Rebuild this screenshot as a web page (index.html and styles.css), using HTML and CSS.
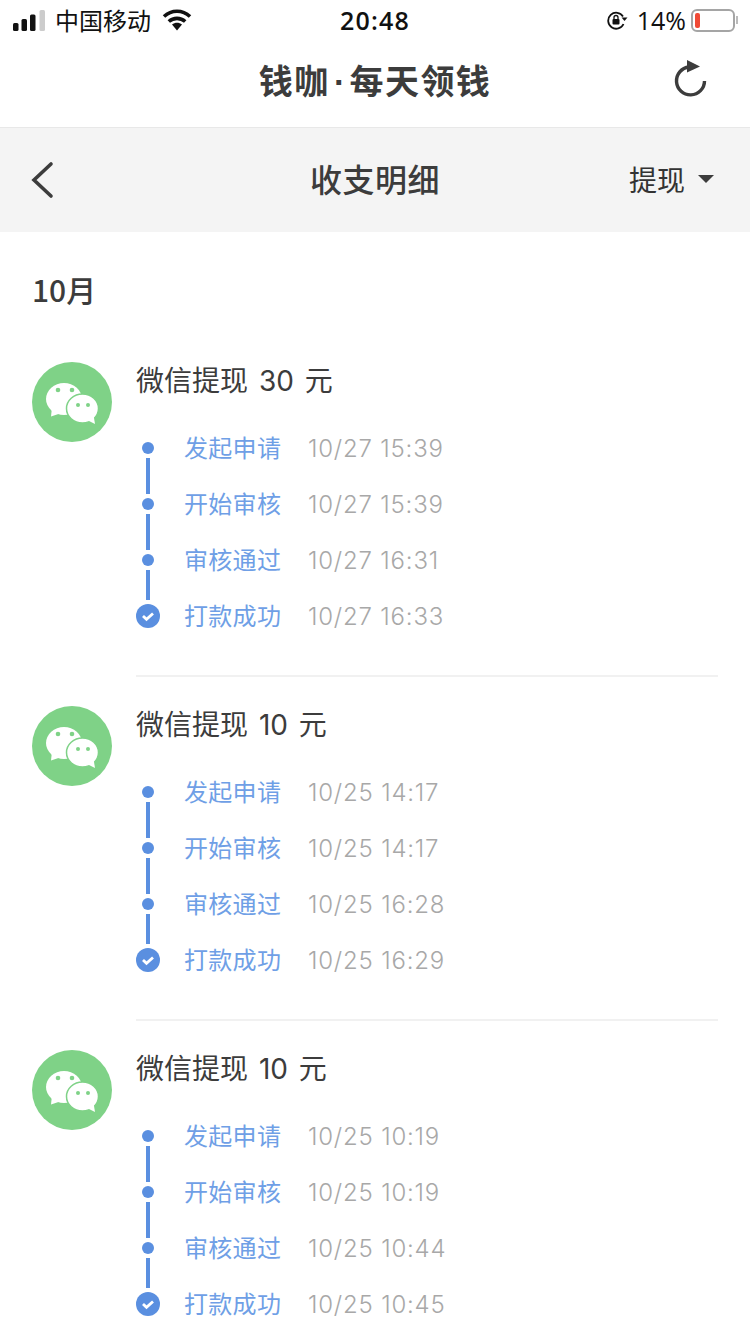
FILE: index.html
```html
<!DOCTYPE html>
<html lang="zh-CN">
<head>
    <meta charset="UTF-8">
    <meta name="viewport" content="width=device-width, initial-scale=1.0">
    <title>钱咖·每天领钱</title>
    <link rel="stylesheet" href="styles.css">
</head>
<body>
    <svg class="defs" width="0" height="0">
        <symbol id="wechat" viewBox="0 0 80 80">
            <circle cx="40" cy="40" r="40" fill="#7fd287"/>
            <ellipse cx="32" cy="37" rx="18" ry="16" fill="#fff"/>
            <path d="M20 45l-1 9.500 12-4z" fill="#fff"/>
            <ellipse cx="50.500" cy="46.500" rx="16" ry="14.500" fill="#fff" stroke="#7fd287" stroke-width="1.500"/>
            <path d="M55 58l8 4-1.500-9z" fill="#fff"/>
            <circle cx="26" cy="28" r="2.300" fill="#7fd287"/>
            <circle cx="40" cy="28" r="2.300" fill="#7fd287"/>
            <circle cx="46" cy="43" r="2" fill="#7fd287"/>
            <circle cx="56" cy="43" r="2" fill="#7fd287"/>
        </symbol>
    </svg>

    <!-- status bar -->
    <div class="status-bar">
        <div class="status-left">
            <svg width="33" height="21" viewBox="0 0 33 21">
                <rect x="0" y="13" width="5.500" height="8" rx="1.500" fill="#111"/>
                <rect x="8.500" y="9" width="5.500" height="12" rx="1.500" fill="#111"/>
                <rect x="17" y="4.500" width="5.500" height="16.500" rx="1.500" fill="#111"/>
                <rect x="26.500" y="0" width="5.500" height="21" rx="1.500" fill="#ccc"/>
            </svg>
            <span class="carrier">中国移动</span>
            <svg width="30" height="22" viewBox="0 0 30 22">
                <path d="M2 7.500C9.500.500 20.500.500 28 7.500" fill="none" stroke="#111" stroke-width="3.600"/>
                <path d="M6.800 12.500C11.500 8.300 18.500 8.300 23.200 12.500" fill="none" stroke="#111" stroke-width="3.600"/>
                <path d="M10 15.500c3-2.300 7-2.300 10 0l-5 6z" fill="#111"/>
            </svg>
        </div>
        <div class="clock">20:48</div>
        <div class="status-right">
            <svg width="22" height="20" viewBox="0 0 22 20">
                <path d="M17 6.500A8 8 0 1 0 17.500 14" fill="none" stroke="#111" stroke-width="1.800"/>
                <path d="M15.500 7.500h6l-3 3.500z" fill="#111"/>
                <rect x="6.500" y="9" width="7" height="5.500" rx="1" fill="#111"/>
                <path d="M8 9V7.500a2 2 0 0 1 4 0V9" fill="none" stroke="#111" stroke-width="1.300"/>
            </svg>
            <span class="battery-pct">14%</span>
            <div class="battery">
                <div class="battery-level"></div>
            </div>
            <div class="battery-cap"></div>
        </div>
    </div>

    <!-- title bar -->
    <div class="app-bar">
        <div class="app-title">钱咖<span class="app-dot">·</span>每天领钱</div>
        <svg class="reload" width="36" height="38" viewBox="0 0 36 38">
            <path d="M32.500 22A14 14 0 1 1 17 8" fill="none" stroke="#3c3c3c" stroke-width="3.400"/>
            <path d="M15 1l13 6.500-13 6z" fill="#3c3c3c"/>
        </svg>
    </div>

    <!-- sub header -->
    <div class="sub-bar">
        <svg class="back" width="24" height="38" viewBox="0 0 24 38">
            <path d="M21 3L4 19l17 16" fill="none" stroke="#3c3c3c" stroke-width="3.600" stroke-linecap="round"/>
        </svg>
        <div class="sub-title">收支明细</div>
        <div class="filter">提现<span class="caret"></span></div>
    </div>

    <div class="content">
        <h2 class="month">10月</h2>

        <div class="record">
            <svg class="avatar"><use href="#wechat"/></svg>
            <div class="record-body">
                <div class="record-title">微信提现 30 元</div>
                <ul class="steps">
                    <li class="step"><span class="step-name">发起申请</span><span class="step-time">10/27 15:39</span></li>
                    <li class="step"><span class="step-name">开始审核</span><span class="step-time">10/27 15:39</span></li>
                    <li class="step"><span class="step-name">审核通过</span><span class="step-time">10/27 16:31</span></li>
                    <li class="step done"><svg class="check" viewBox="0 0 24 24"><path d="M7 12l3.500 3.300L17 9.500" fill="none" stroke="#fff" stroke-width="2.800"/></svg><span class="step-name">打款成功</span><span class="step-time">10/27 16:33</span></li>
                </ul>
            </div>
        </div>

        <div class="record">
            <svg class="avatar"><use href="#wechat"/></svg>
            <div class="record-body">
                <div class="record-title">微信提现 10 元</div>
                <ul class="steps">
                    <li class="step"><span class="step-name">发起申请</span><span class="step-time">10/25 14:17</span></li>
                    <li class="step"><span class="step-name">开始审核</span><span class="step-time">10/25 14:17</span></li>
                    <li class="step"><span class="step-name">审核通过</span><span class="step-time">10/25 16:28</span></li>
                    <li class="step done"><svg class="check" viewBox="0 0 24 24"><path d="M7 12l3.500 3.300L17 9.500" fill="none" stroke="#fff" stroke-width="2.800"/></svg><span class="step-name">打款成功</span><span class="step-time">10/25 16:29</span></li>
                </ul>
            </div>
        </div>

        <div class="record">
            <svg class="avatar"><use href="#wechat"/></svg>
            <div class="record-body">
                <div class="record-title">微信提现 10 元</div>
                <ul class="steps">
                    <li class="step"><span class="step-name">发起申请</span><span class="step-time">10/25 10:19</span></li>
                    <li class="step"><span class="step-name">开始审核</span><span class="step-time">10/25 10:19</span></li>
                    <li class="step"><span class="step-name">审核通过</span><span class="step-time">10/25 10:44</span></li>
                    <li class="step done"><svg class="check" viewBox="0 0 24 24"><path d="M7 12l3.500 3.300L17 9.500" fill="none" stroke="#fff" stroke-width="2.800"/></svg><span class="step-name">打款成功</span><span class="step-time">10/25 10:45</span></li>
                </ul>
            </div>
        </div>
    </div>
</body>
</html>
```

FILE: styles.css
```css
html, body {
    margin: 0;
    padding: 0;
    height: 1334px;
    overflow: hidden;
    background-color: #fff;
    font-family: "Noto Sans CJK SC", "Noto Sans", sans-serif;
    color: #3c3c3c;
}
.defs {
    display: block;
    height: 0;
}
.status-bar {
    height: 40px;
    display: flex;
    align-items: center;
    justify-content: space-between;
    padding: 0 10px 0 13px;
    color: #111;
    position: relative;
}
.status-left {
    display: flex;
    align-items: center;
}
.carrier {
    font-size: 24px;
    margin-left: 9px;
    margin-right: 11px;
    padding-bottom: 2px;
}
.clock {
    position: absolute;
    left: 0;
    right: 0;
    text-align: center;
    font-family: "Open Sans", sans-serif;
    font-size: 25px;
    font-weight: 600;
    letter-spacing: 1.200px;
}
.status-right {
    display: flex;
    align-items: center;
}
.battery-pct {
    font-family: "Open Sans", sans-serif;
    font-size: 25px;
    margin: 0 5px 0 9px;
}
.battery {
    width: 44px;
    height: 23px;
    box-sizing: border-box;
    border: 2px solid #a5a5a5;
    border-radius: 6px;
    padding: 2px;
}
.battery-level {
    width: 5px;
    height: 100%;
    background-color: #f04a36;
    border-radius: 2px;
}
.battery-cap {
    width: 2px;
    height: 8px;
    margin-left: 1px;
    margin-right: 2px;
    background-color: #bbb;
}
.app-bar {
    height: 87px;
    display: flex;
    align-items: center;
    justify-content: center;
    position: relative;
    border-bottom: 1px solid #e8e8e8;
}
.app-title {
    font-size: 34px;
    font-weight: 700;
    letter-spacing: 1.400px;
    padding-bottom: 8px;
}
.app-dot {
    display: inline-block;
    width: 20px;
    text-align: center;
    font-family: "Liberation Sans", sans-serif;
    letter-spacing: 0;
}
.reload {
    position: absolute;
    right: 42px;
    top: 19px;
}
.sub-bar {
    height: 104px;
    background-color: #f4f4f4;
    display: flex;
    align-items: center;
    justify-content: center;
    position: relative;
}
.back {
    position: absolute;
    left: 30px;
    top: 33px;
}
.sub-title {
    font-size: 32px;
    font-weight: 500;
    letter-spacing: 0.500px;
    padding-bottom: 5px;
}
.filter {
    position: absolute;
    right: 36px;
    top: 0;
    bottom: 0;
    padding-bottom: 2px;
    display: flex;
    align-items: center;
    font-size: 28px;
    color: #333;
}
.caret {
    width: 0;
    height: 0;
    margin-left: 13px;
    border-left: 8px solid transparent;
    border-right: 8px solid transparent;
    border-top: 8px solid #3c3c3c;
}
.content {
    padding: 0 32px;
}
.month {
    margin: 0;
    padding-top: 35px;
    height: 100px;
    box-sizing: border-box;
    line-height: 44px;
    font-size: 30px;
    font-weight: 500;
}
.record {
    display: flex;
    padding-top: 30px;
}
.avatar {
    width: 80px;
    height: 80px;
    flex: none;
}
.record-body {
    flex: 1;
    margin-left: 24px;
    height: 313px;
    border-bottom: 2px solid #f1f1f1;
    margin-bottom: -1px;
}
.record-title {
    font-family: "Inter", "Noto Sans CJK SC", sans-serif;
    font-size: 28px;
    line-height: 38px;
    word-spacing: 3px;
    color: #3c3c3c;
}
.steps {
    list-style: none;
    margin: 20px 0 0;
    padding: 0 0 0 48px;
}
.step {
    height: 56px;
    padding-bottom: 4px;
    box-sizing: border-box;
    display: flex;
    align-items: center;
    position: relative;
    font-size: 24px;
}
.step::before {
    content: "";
    position: absolute;
    left: -42px;
    top: 22px;
    width: 12px;
    height: 12px;
    border-radius: 50%;
    background-color: #5a8fe0;
}
.step::after {
    content: "";
    position: absolute;
    left: -38px;
    top: 38px;
    width: 4px;
    height: 36px;
    background-color: #5a8fe0;
}
.step:nth-child(3)::after {
    height: 30px;
}
.step.done::before {
    left: -48px;
    top: 16px;
    width: 24px;
    height: 24px;
}
.step.done::after {
    display: none;
}
.check {
    position: absolute;
    left: -48px;
    top: 16px;
    width: 24px;
    height: 24px;
    z-index: 1;
}
.step-name {
    width: 124px;
    color: #6f9fe6;
    letter-spacing: 0.300px;
}
.step-time {
    font-family: "Inter", sans-serif;
    font-weight: 300;
    color: #a8a8a8;
    letter-spacing: 0.800px;
    padding-top: 4px;
}
```
